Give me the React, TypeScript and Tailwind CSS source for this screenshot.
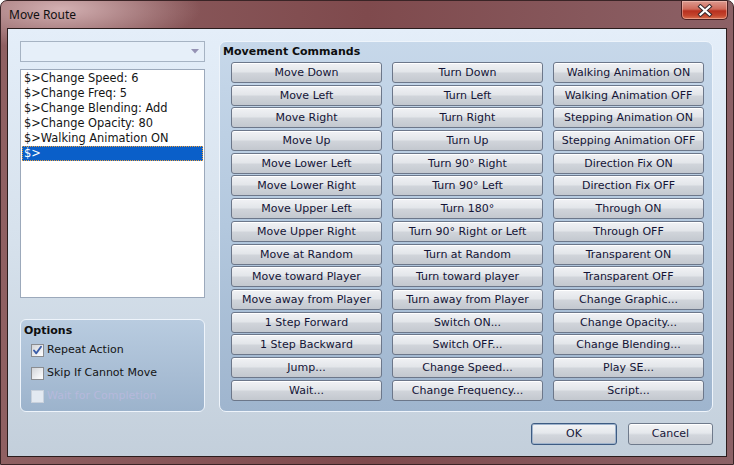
import React from "react";

const col1 = [
  "Move Down",
  "Move Left",
  "Move Right",
  "Move Up",
  "Move Lower Left",
  "Move Lower Right",
  "Move Upper Left",
  "Move Upper Right",
  "Move at Random",
  "Move toward Player",
  "Move away from Player",
  "1 Step Forward",
  "1 Step Backward",
  "Jump...",
  "Wait...",
];
const col2 = [
  "Turn Down",
  "Turn Left",
  "Turn Right",
  "Turn Up",
  "Turn 90° Right",
  "Turn 90° Left",
  "Turn 180°",
  "Turn 90° Right or Left",
  "Turn at Random",
  "Turn toward player",
  "Turn away from Player",
  "Switch ON...",
  "Switch OFF...",
  "Change Speed...",
  "Change Frequency...",
];
const col3 = [
  "Walking Animation ON",
  "Walking Animation OFF",
  "Stepping Animation ON",
  "Stepping Animation OFF",
  "Direction Fix ON",
  "Direction Fix OFF",
  "Through ON",
  "Through OFF",
  "Transparent ON",
  "Transparent OFF",
  "Change Graphic...",
  "Change Opacity...",
  "Change Blending...",
  "Play SE...",
  "Script...",
];

const listItems = [
  "$>Change Speed: 6",
  "$>Change Freq: 5",
  "$>Change Blending: Add",
  "$>Change Opacity: 80",
  "$>Walking Animation ON",
];

function CmdButton({ label }: { label: string }) {
  return (
    <div className="h-[21px] flex items-center justify-center rounded-[3px] border border-[#6c778a] bg-[linear-gradient(to_bottom,#f1f2f5_0%,#e3e6ea_45%,#d0d4da_55%,#c3c8cf_100%)] text-[11px] leading-none text-[#141436] whitespace-nowrap shadow-[inset_0_1px_0_#ffffff]">
      {label}
    </div>
  );
}

function CheckRow({
  label,
  checked,
  disabled,
}: {
  label: string;
  checked?: boolean;
  disabled?: boolean;
}) {
  return (
    <div className="flex items-center h-[23px] pl-[7px]">
      <div
        className={
          disabled
            ? "w-[13px] h-[13px] border border-[#c9d1dc] bg-[#e3e9f1]"
            : "w-[13px] h-[13px] border border-[#8a8c90] bg-[linear-gradient(135deg,#d2d4d8_0%,#f2f3f5_70%,#ffffff_100%)] flex items-center justify-center"
        }
      >
        {checked && (
          <svg width="11" height="11" viewBox="0 0 11 11">
            <path
              d="M2 5.5 L4.3 8.3 L9 1.8"
              fill="none"
              stroke="#3a5ca8"
              strokeWidth="1.9"
              strokeLinecap="round"
              strokeLinejoin="round"
            />
          </svg>
        )}
      </div>
      <span
        className={
          disabled
            ? "ml-[3px] text-[11px] text-[#b6b9dc]"
            : "ml-[3px] text-[11px] text-[#141414]"
        }
      >
        {label}
      </span>
    </div>
  );
}

export default function App() {
  return (
    <div
      className="w-[734px] h-[465px] flex flex-col border border-[#3a2426] rounded-t-[7px] bg-[radial-gradient(ellipse_140px_40px_at_60px_8px,#d3b0b2_0%,rgba(160,110,112,0)_100%),linear-gradient(to_right,#8f6062_0%,#7f4a4d_50%,#8c6166_100%)] overflow-hidden"
      style={{ fontFamily: '"DejaVu Sans", Verdana, sans-serif' }}
    >
      {/* title bar */}
      <div className="h-[27px] flex items-start justify-between pl-[8px] pr-[5px] shrink-0">
        <div
          className="pt-[5px] text-[12px] text-[#101010]"
          style={{ fontFamily: '"Noto Sans", "Open Sans", sans-serif' }}
        >
          Move Route
        </div>
        <div className="w-[47px] h-[19px] rounded-b-[5px] border border-t-0 border-[#4b2022] bg-[linear-gradient(to_bottom,#dc9a90_0%,#cf6a5a_45%,#b8301f_55%,#c4452d_80%,#d97050_100%)] shadow-[inset_0_0_0_1px_rgba(255,210,200,0.45)] flex items-center justify-center">
          <svg width="16" height="13" viewBox="0 0 16 13">
            <path
              d="M3.5 2.5 L12.5 10.5 M12.5 2.5 L3.5 10.5"
              stroke="#3a2a2e"
              strokeWidth="4.2"
              strokeLinecap="square"
            />
            <path
              d="M3.5 2.5 L12.5 10.5 M12.5 2.5 L3.5 10.5"
              stroke="#ffffff"
              strokeWidth="2.2"
              strokeLinecap="square"
            />
          </svg>
        </div>
      </div>

      {/* client */}
      <div className="ml-[6px] w-[720px] h-[429px] border border-[#2a1c1c] bg-[linear-gradient(to_bottom,#e4eef9_0%,#d6e1ec_50%,#c3cfdb_100%)] flex flex-col pt-[12px] pl-[12px] pr-[13px] pb-[11px]">
        <div className="flex h-[371px] gap-[14px]">
          {/* left column */}
          <div className="w-[185px] flex flex-col">
            <div className="h-[21px] border border-[#a6b3c3] bg-[#e6eff9] flex items-center justify-end pr-[5px]">
              <svg width="8" height="5" viewBox="0 0 8 5">
                <path d="M0 0 L8 0 L4 4.5 Z" fill="#9592b4" />
              </svg>
            </div>
            <div className="mt-[7px] h-[229px] border border-[#9ca9bb] bg-white p-[1px]">
              {listItems.map((t) => (
                <div
                  key={t}
                  className="h-[15px] pl-[2px] text-[11.4px] leading-[15px] text-[#141414] whitespace-nowrap"
                >
                  {t}
                </div>
              ))}
              <div className="h-[15px] pl-[1px] text-[11.4px] leading-[13px] text-white bg-[#0a5fc9] border border-dotted border-[#e8a040]">
                $&gt;
              </div>
            </div>
            <div className="mt-[21px] h-[93px] rounded-[6px] border border-[#eef4fb] bg-[linear-gradient(to_bottom,#b9cce0_0%,#a8bdd4_60%,#9cb3cc_100%)] flex flex-col pt-[3px] pl-[3px]">
              <div className="text-[11px] font-bold text-[#0e0e0e] h-[16px] leading-[16px]">
                Options
              </div>
              <CheckRow label="Repeat Action" checked />
              <CheckRow label="Skip If Cannot Move" />
              <CheckRow label="Wait for Completion" disabled />
            </div>
          </div>

          {/* movement commands group */}
          <div className="w-[494px] rounded-[7px] border border-[#eef4fb] bg-[linear-gradient(to_bottom,#c7d8ea_0%,#b3c8de_50%,#9fb5ce_100%)] flex flex-col">
            <div className="h-[20px] pl-[3px] leading-[19px] text-[11px] font-bold text-[#0e0e0e]">
              Movement Commands
            </div>
            <div className="pl-[11px] pr-[8px] grid grid-cols-[151px_151px_151px] gap-x-[10px]">
              {[col1, col2, col3].map((col, ci) => (
                <div key={ci} className="flex flex-col gap-[1.7px]">
                  {col.map((l) => (
                    <CmdButton key={l} label={l} />
                  ))}
                </div>
              ))}
            </div>
          </div>
        </div>

        {/* bottom buttons */}
        <div className="mt-[11px] flex justify-end gap-[11px] h-[22px]">
          <div className="w-[86px] h-[22px] rounded-[3px] border border-[#3d5b82] bg-[linear-gradient(to_bottom,#f3f4f6_0%,#e5e8ec_45%,#d2d6dc_55%,#c7cbd2_100%)] shadow-[inset_0_0_0_1px_#9fb3cc] flex items-center justify-center text-[11px] text-[#18183a]">
            OK
          </div>
          <div className="w-[85px] h-[22px] rounded-[3px] border border-[#6f7a8b] bg-[linear-gradient(to_bottom,#f3f4f6_0%,#e5e8ec_45%,#d2d6dc_55%,#c7cbd2_100%)] shadow-[inset_0_1px_0_#ffffff] flex items-center justify-center text-[11px] text-[#18183a]">
            Cancel
          </div>
        </div>
      </div>
    </div>
  );
}
